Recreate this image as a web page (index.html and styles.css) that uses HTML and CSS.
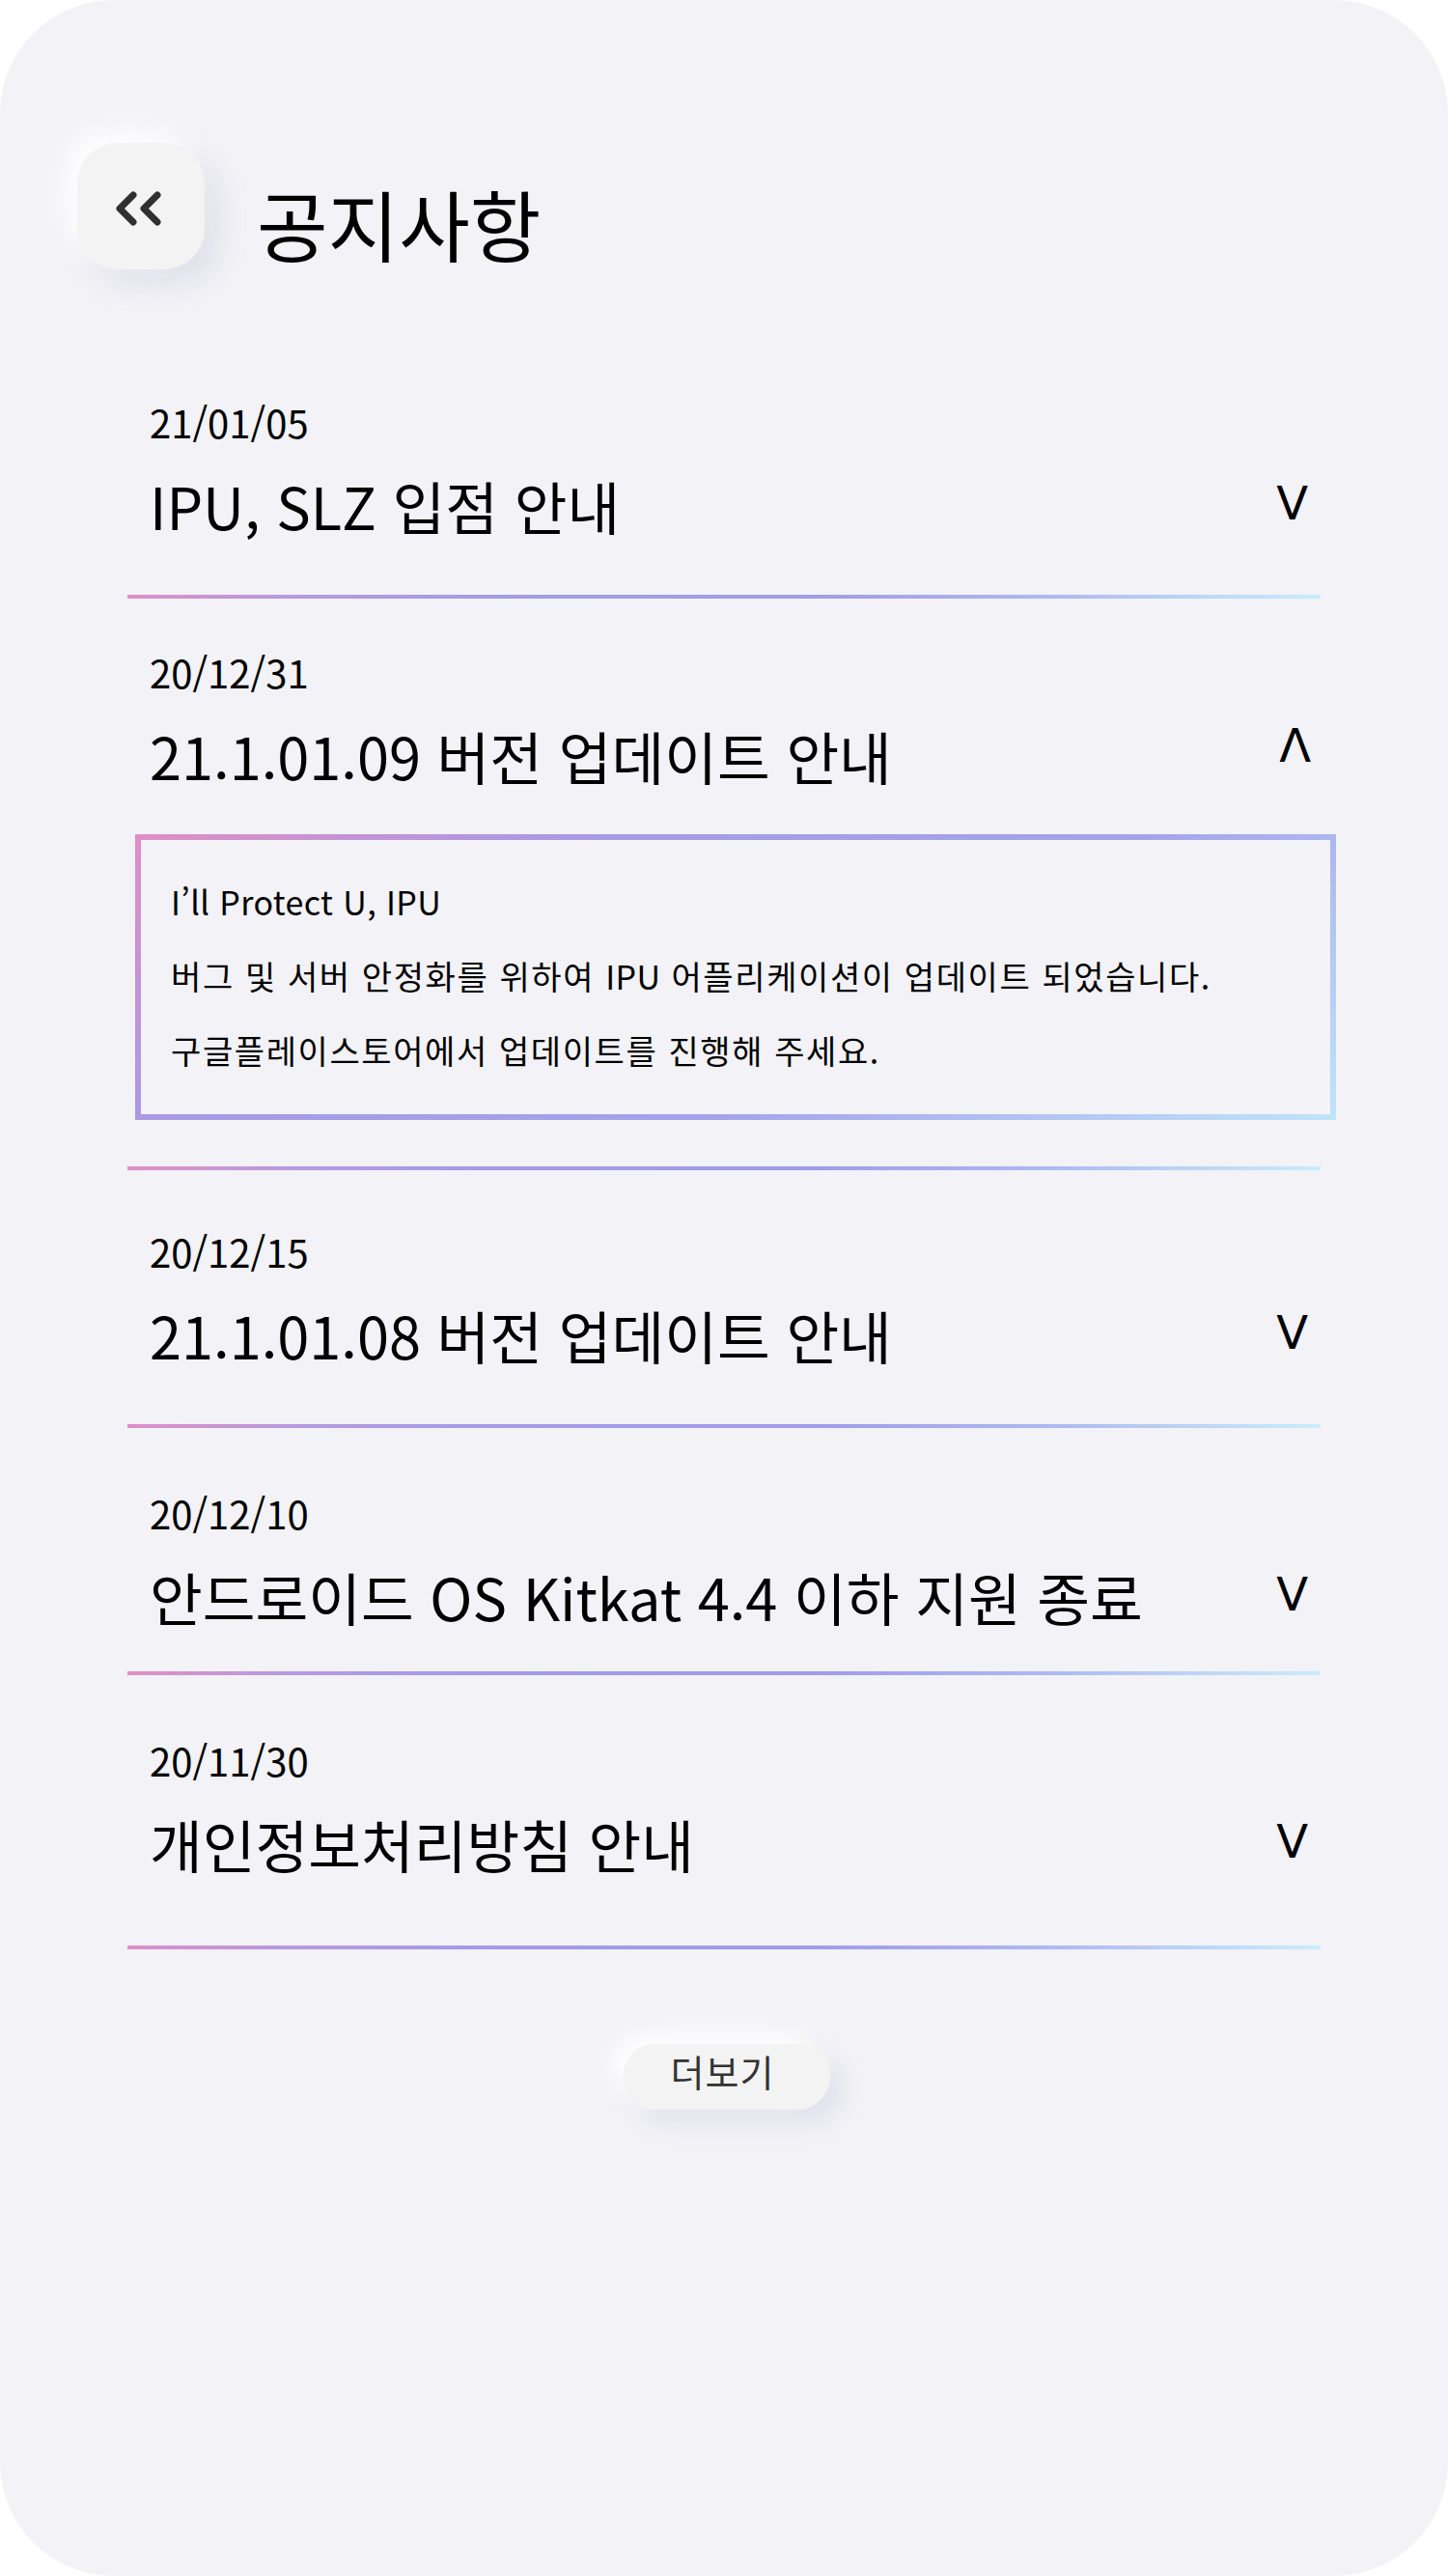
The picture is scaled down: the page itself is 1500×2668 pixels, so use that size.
FILE: index.html
```html
<!DOCTYPE html>
<html lang="ko">
<head>
<meta charset="utf-8">
<title>공지사항</title>
<link rel="stylesheet" href="styles.css">
</head>
<body>
<div class="card">
  <header class="header">
    <button class="back" aria-label="뒤로">
      <svg class="back-icon" viewBox="0 0 52 36" width="52" height="36">
        <path d="M20 4 L6 18 L20 32" />
        <path d="M45 4 L31 18 L45 32" />
      </svg>
    </button>
    <h1 class="page-title">공지사항</h1>
  </header>

  <ul class="notices">
    <li class="notice notice--1">
      <div class="date">21/01/05</div>
      <div class="row">
        <span class="title">IPU, SLZ 입점 안내</span>
        <span class="toggle">V</span>
      </div>
    </li>
    <li class="notice notice--2">
      <div class="date">20/12/31</div>
      <div class="row">
        <span class="title">21.1.01.09 버전 업데이트 안내</span>
        <span class="toggle toggle--open">Λ</span>
      </div>
      <div class="detail">
        <p><span class="latin">I’ll Protect U, IPU</span></p>
        <p>버그 및 서버 안정화를 위하여 <span class="latin">IPU</span> 어플리케이션이 업데이트 되었습니다.</p>
        <p>구글플레이스토어에서 업데이트를 진행해 주세요.</p>
      </div>
    </li>
    <li class="notice notice--3">
      <div class="date">20/12/15</div>
      <div class="row">
        <span class="title">21.1.01.08 버전 업데이트 안내</span>
        <span class="toggle">V</span>
      </div>
    </li>
    <li class="notice notice--4">
      <div class="date">20/12/10</div>
      <div class="row">
        <span class="title">안드로이드 OS Kitkat 4.4 이하 지원 종료</span>
        <span class="toggle">V</span>
      </div>
    </li>
    <li class="notice notice--5">
      <div class="date">20/11/30</div>
      <div class="row">
        <span class="title">개인정보처리방침 안내</span>
        <span class="toggle">V</span>
      </div>
    </li>
  </ul>

  <div class="more-wrap">
    <button class="more">더보기</button>
  </div>
</div>
</body>
</html>
```

FILE: styles.css
```css
* {
  box-sizing: border-box;
}

html, body {
  margin: 0;
  padding: 0;
  background: #ffffff;
}

body {
  font-family: "Noto Sans CJK KR", "Noto Sans", sans-serif;
  color: #000;
}

.card {
  width: 1500px;
  height: 2668px;
  background: #F2F2F7;
  border-radius: 118px;
  overflow: hidden;
}

/* Header */
.header {
  display: flex;
  align-items: flex-start;
  gap: 54px;
  padding: 148px 0 0 80px;
}

.back {
  width: 132px;
  height: 131px;
  border: none;
  padding: 0;
  border-radius: 42px;
  background: #F3F3F3;
  box-shadow: -14px -14px 30px rgba(255, 255, 255, 0.95),
              14px 14px 30px rgba(160, 160, 185, 0.22);
  display: flex;
  align-items: center;
  justify-content: center;
}

.back-icon {
  margin: 5px 4px 0 0;
  fill: none;
  stroke: #303030;
  stroke-width: 7;
  stroke-linecap: round;
  stroke-linejoin: round;
}

.page-title {
  margin: 37px 0 0;
  font-size: 80px;
  line-height: 90px;
  font-weight: 400;
}

/* Notice list */
.notices {
  list-style: none;
  margin: 0 132px;
  padding: 0;
}

.notice {
  padding-left: 23px;
  background-image: linear-gradient(90deg, #DE8FC6 0%, #B69AE0 14%, #A69AE7 28%, #A19CE9 58%, #AEBAF1 78%, #C9EDFA 100%);
  background-repeat: no-repeat;
  background-position: left bottom;
  background-size: 100% 4px;
}

.notice--1 { padding-top: 133px; padding-bottom: 36px; }
.notice--2 { padding-top: 51px; padding-bottom: 52px; }
.notice--3 { padding-top: 59px; padding-bottom: 36px; }
.notice--4 { padding-top: 63px; padding-bottom: 21px; }
.notice--5 { padding-top: 63px; padding-bottom: 49px; }

.date {
  font-size: 40px;
  line-height: 50px;
}

.row {
  display: flex;
  align-items: flex-start;
  justify-content: space-between;
}

.title {
  font-size: 59.5px;
  line-height: 122px;
  white-space: nowrap;
}

.toggle {
  font-family: "DejaVu Sans", sans-serif;
  font-size: 48px;
  line-height: 119px;
  margin-right: 13px;
}

.toggle--open {
  line-height: 103px;
  margin-right: 10px;
}

/* Expanded detail */
.detail {
  width: 1244px;
  margin: 21px 0 0 -15px;
  padding: 25px 31px 28px;
  border: 6px solid transparent;
  border-image: linear-gradient(146deg, #DE8FC6 0%, #A89AE6 28%, #A3A3EB 62%, #BFE3FA 100%) 1;
}

.detail p {
  margin: 0;
  font-size: 34px;
  line-height: 77px;
  letter-spacing: 1.6px;
  white-space: nowrap;
}

.detail .latin {
  letter-spacing: 0.4px;
}

/* More button */
.more-wrap {
  display: flex;
  justify-content: center;
  padding-top: 98px;
}

.more {
  margin-left: 5px;
  border: none;
  border-radius: 34px;
  background: #F3F3F3;
  color: #333;
  font-family: "Noto Sans CJK KR", sans-serif;
  font-size: 38px;
  line-height: 55px;
  letter-spacing: 1px;
  padding: 0 58px 13px 50px;
  box-shadow: -12px -12px 26px rgba(255, 255, 255, 0.95),
              12px 12px 26px rgba(160, 160, 185, 0.22);
}
```
